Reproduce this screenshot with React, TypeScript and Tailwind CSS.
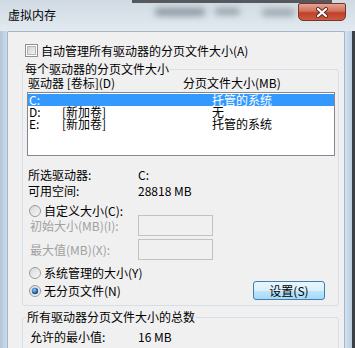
import { useId } from "react";

function Radio({ checked = false }: { checked?: boolean }) {
  const id = useId();
  return (
    <svg width="12" height="12" viewBox="0 0 12 12" className="shrink-0">
      <defs>
        <linearGradient id={id + "bg"} x1="0" y1="0" x2="1" y2="1">
          <stop offset="0" stopColor="#d6d6d6" />
          <stop offset="1" stopColor="#fafafa" />
        </linearGradient>
        <radialGradient id={id + "dot"} cx="0.4" cy="0.35" r="0.7">
          <stop offset="0" stopColor="#9fd0f5" />
          <stop offset="0.5" stopColor="#3a7bc0" />
          <stop offset="1" stopColor="#14396b" />
        </radialGradient>
      </defs>
      <circle cx="6" cy="6" r="5.5" fill={`url(#${id}bg)`} stroke="#9a9a9a" />
      {checked && <circle cx="6" cy="6" r="3.2" fill={`url(#${id}dot)`} />}
    </svg>
  );
}

function Checkbox() {
  return (
    <svg width="13" height="13" viewBox="0 0 13 13" className="shrink-0">
      <defs>
        <linearGradient id="cbg" x1="0" y1="0" x2="1" y2="1">
          <stop offset="0" stopColor="#cfcfcf" />
          <stop offset="1" stopColor="#f6f6f6" />
        </linearGradient>
      </defs>
      <rect x="0.5" y="0.5" width="12" height="12" fill="#fff" stroke="#8e8f8f" />
      <rect x="2.5" y="2.5" width="8" height="8" fill="url(#cbg)" stroke="#b5b5b5" />
    </svg>
  );
}

const drives = [
  { d: "C:", label: "", size: "托管的系统", sel: true },
  { d: "D:", label: "[新加卷]", size: "无", sel: false },
  { d: "E:", label: "[新加卷]", size: "托管的系统", sel: false },
];

export default function App() {
  return (
    <div className="w-[355px] h-[348px] overflow-hidden flex flex-col bg-[#cfdbe6] font-['Noto_Sans_CJK_SC',sans-serif] text-[12px] leading-[12px] text-black">
      {/* Title bar (glass, blurred desktop behind) */}
      <div className="h-[31px] shrink-0 flex flex-col bg-gradient-to-b from-[#d0dae3] to-[#e3eaf0]">
        <div className="h-[3px] flex">
          <div className="w-[132px]" />
          <div className="w-[200px] bg-[#55595d]" />
        </div>
        <div className="flex items-start h-[28px]">
          <span className="mt-[6px] ml-[8px] w-[48px]">虚拟内存</span>
          <div className="ml-[99px] mt-[5px] w-[50px] h-[8px] rounded-full bg-[#8f99a2] blur-[3px]" />
          <div className="ml-[10px] mt-[5px] w-[25px] h-[7px] rounded-full bg-[#9aa3ab] blur-[3px]" />
          <div className="ml-[22px] mt-[6px] w-[33px] h-[7px] rounded-full bg-[#9ba4ac] blur-[3px]" />
          <div className="ml-auto mr-[9px] w-[48px] h-[18px] rounded-b-[5px] rounded-t-[2px] border border-[#7a3326] bg-[linear-gradient(180deg,#e3a596_0%,#d2705c_45%,#bf3f28_55%,#cc5c42_100%)] flex items-center justify-center">
            <svg width="14" height="11" viewBox="0 0 14 11">
              <path d="M3 2 L11 9 M11 2 L3 9" stroke="#5a2a22" strokeWidth="4" strokeLinecap="round" />
              <path d="M3 2 L11 9 M11 2 L3 9" stroke="#ffffff" strokeWidth="2.2" strokeLinecap="round" />
            </svg>
          </div>
        </div>
      </div>

      {/* Body */}
      <div className="flex flex-1 min-h-0">
        <div className="w-[7px] shrink-0 bg-gradient-to-r from-[#b2c6d8] to-[#cddcea]" />
        <div className="w-[338px] shrink-0 bg-[#f0f0f0] border border-b-0 border-[#a3b6c8] rounded-t-[2px] flex flex-col">
          {/* Auto manage */}
          <div className="flex items-center gap-[3px] ml-[17px] mt-[12px] h-[13px]">
            <Checkbox />
            <span>自动管理所有驱动器的分页文件大小(A)</span>
          </div>

          {/* Per-drive group */}
          <fieldset className="ml-[14px] w-[317px] mt-[6px] border border-[#d5dfe5] rounded-[3px] pb-[5px]">
            <legend className="ml-[1px] px-[1px] leading-[12px]">每个驱动器的分页文件大小</legend>
            <div className="flex mt-[2px] h-[12px] pl-[5px]">
              <span className="w-[155px]">驱动器 [卷标](D)</span>
              <span>分页文件大小(MB)</span>
            </div>
            <div className="ml-[4px] mt-[3px] w-[308px] h-[64px] border border-[#828790] bg-white pt-[1px]">
              {drives.map((r) => (
                <div
                  key={r.d}
                  className={
                    "flex h-[12px] " + (r.sel ? "bg-[#3399ff] text-white" : "")
                  }
                >
                  <span className="w-[34px] pl-[1px]">{r.d}</span>
                  <span className="w-[150px]">{r.label}</span>
                  <span>{r.size}</span>
                </div>
              ))}
            </div>

            <div className="flex mt-[13px] h-[12px] pl-[5px]">
              <span className="w-[110px]">所选驱动器:</span>
              <span>C:</span>
            </div>
            <div className="flex mt-[4px] h-[12px] pl-[5px]">
              <span className="w-[110px]">可用空间:</span>
              <span>28818 MB</span>
            </div>

            <div className="flex items-center gap-[3px] mt-[8px] h-[12px] pl-[6px]">
              <Radio />
              <span>自定义大小(C):</span>
            </div>
            <div className="flex items-center mt-[-2px] h-[21px] pl-[7px]">
              <span className="w-[108px] text-[#a0a0a0]">初始大小(MB)(I):</span>
              <div className="w-[75px] h-[21px] border border-[#c2c2c2] bg-[#f0f0f0]" />
            </div>
            <div className="flex items-center mt-[3px] h-[21px] pl-[7px]">
              <span className="w-[108px] text-[#a0a0a0]">最大值(MB)(X):</span>
              <div className="w-[75px] h-[21px] border border-[#c2c2c2] bg-[#f0f0f0]" />
            </div>

            <div className="flex items-center gap-[3px] mt-[7px] h-[12px] pl-[6px]">
              <Radio />
              <span>系统管理的大小(Y)</span>
            </div>
            <div className="flex items-center gap-[3px] mt-[2px] h-[19px] pl-[6px]">
              <Radio checked />
              <span>无分页文件(N)</span>
              <button className="ml-auto mr-[13px] w-[72px] h-[19px] rounded-[3px] border border-[#3c7fb1] bg-[linear-gradient(180deg,#eaf6fd_0%,#d9f0fc_50%,#bee6fd_50%,#a7d9f5_100%)] flex items-center justify-center text-[12px] leading-[12px]">
                设置(S)
              </button>
            </div>
          </fieldset>

          {/* Totals group */}
          <fieldset className="ml-[14px] w-[317px] mt-[5px] border border-[#d5dfe5] rounded-[3px] pb-[20px]">
            <legend className="ml-[3px] px-[1px] leading-[12px]">所有驱动器分页文件大小的总数</legend>
            <div className="flex mt-[8px] h-[12px] pl-[7px]">
              <span className="w-[108px]">允许的最小值:</span>
              <span>16 MB</span>
            </div>
          </fieldset>
        </div>
        <div className="w-[7px] shrink-0 bg-gradient-to-r from-[#d3e2ef] to-[#b9cde0]" />
        <div className="w-[3px] shrink-0 bg-[#3b4046]" />
      </div>
    </div>
  );
}
